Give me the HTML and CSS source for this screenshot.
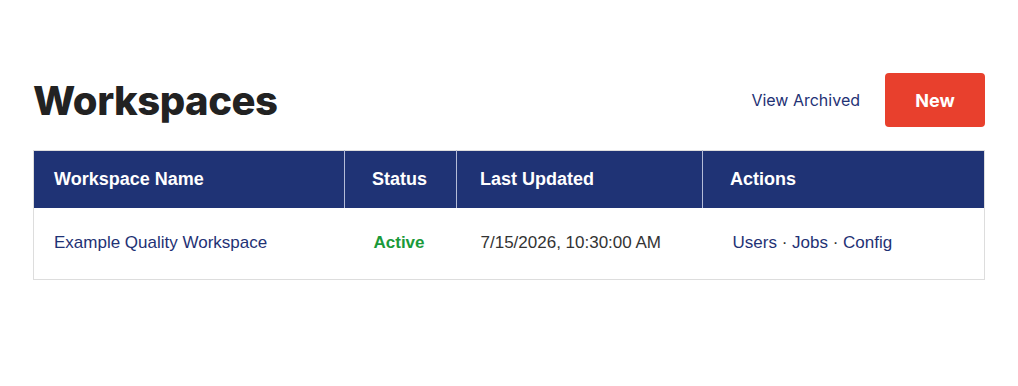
FILE: index.html
```html
<!DOCTYPE html>
<html lang="en">

<head>
    <meta charset="UTF-8">
    <meta name="viewport" content="width=device-width, initial-scale=1.0">
    <title>Workspaces</title>
    <link rel="stylesheet" href="styles.css">
</head>

<body>
    <div class="container">
        <div class="toolbar">
            <h1>Workspaces</h1>
            <div class="toolbar-actions">
                <a href="#" class="archived-link">View Archived</a>
                <button class="button primary">New</button>
            </div>
        </div>

        <table class="workspaces">
            <thead>
                <tr>
                    <th class="col-name">Workspace Name</th>
                    <th class="col-status">Status</th>
                    <th class="col-updated">Last Updated</th>
                    <th class="col-actions">Actions</th>
                </tr>
            </thead>
            <tbody>
                <tr>
                    <td><a href="#">Example Quality Workspace</a></td>
                    <td><span class="status-active">Active</span></td>
                    <td>7/15/2026, 10:30:00 AM</td>
                    <td class="actions">
                        <a href="#">Users</a> · <a href="#">Jobs</a> · <a href="#">Config</a>
                    </td>
                </tr>
            </tbody>
        </table>
    </div>
</body>

</html>
```

FILE: styles.css
```css
body {
    font-family: "Liberation Sans", Arial, sans-serif;
    margin: 0;
    padding: 0;
    background: #fff;
    color: #333;
}

.container {
    padding: 73px 33px 0;
}

.toolbar {
    display: flex;
    justify-content: space-between;
    align-items: center;
    margin-bottom: 23px;
}

h1 {
    font-family: Inter, sans-serif;
    font-weight: 800;
    font-size: 40px;
    color: #222;
    margin: 0;
    letter-spacing: -0.5px;
}

.toolbar-actions {
    display: flex;
    align-items: center;
    gap: 25px;
}

.archived-link {
    font-family: Inter, sans-serif;
    font-size: 16px;
    color: #1f3275;
    text-decoration: none;
}

.button {
    border: none;
    border-radius: 4px;
    cursor: pointer;
    font-family: Inter, sans-serif;
    font-weight: 700;
    font-size: 18px;
    width: 100px;
    height: 54px;
}

.primary {
    background: #e8402d;
    color: white;
}

.workspaces {
    width: 100%;
    border-collapse: collapse;
    table-layout: fixed;
    border: 1px solid #ddd;
}

.workspaces th,
.workspaces td {
    box-sizing: border-box;
    text-align: left;
    padding: 0 20px;
    white-space: nowrap;
}

.workspaces th {
    background: #1f3375;
    color: white;
    font-weight: bold;
    font-size: 18px;
    height: 57px;
    border-left: 1px solid #b4bcd8;
}

.workspaces th:first-child {
    border-left: none;
}

.col-name {
    width: 311px;
}

.col-status {
    width: 112px;
}

.col-updated {
    width: 246px;
}

.workspaces td {
    height: 72px;
    font-size: 17px;
    color: #333;
}

.workspaces th:nth-child(2) {
    padding-left: 27px;
}

.workspaces td:nth-child(2) {
    padding-left: 29px;
}

.workspaces th:nth-child(3) {
    padding-left: 23px;
}

.workspaces td:nth-child(3) {
    padding-left: 24px;
}

.workspaces th:nth-child(4) {
    padding-left: 27px;
}

.workspaces td:nth-child(4) {
    padding-left: 30px;
}

.workspaces a {
    color: #1f3275;
    text-decoration: none;
}

.status-active {
    color: #1a9a3a;
    font-weight: bold;
}
```
